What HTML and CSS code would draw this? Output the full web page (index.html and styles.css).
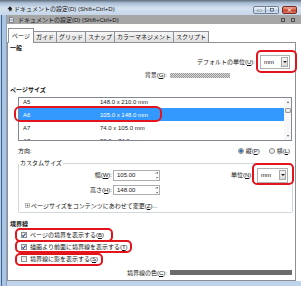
FILE: index.html
```html
<!DOCTYPE html>
<html>
<head>
<meta charset="utf-8">
<title>ドキュメントの設定</title>
<link rel="stylesheet" href="styles.css">
</head>
<body>
<div class="win">
  <div class="titlebar">
    <svg class="appicon" viewBox="0 0 6 6"><path d="M3 0.3 L5.7 3.2 L4.4 3.2 L4.4 5.6 L3.6 4.4 L2.6 5.6 L2 3.2 L0.3 3.2 Z" fill="#1c1c1c"/></svg>
    <span class="ttl">ドキュメントの設定(D) (Shift+Ctrl+D)</span>
    <div class="wbtns">
      <span class="wb min"><svg viewBox="0 0 13 8"><rect x="4" y="4" width="5" height="1.5" fill="#fff" stroke="#3b4a5e" stroke-width="0.5"/></svg></span>
      <span class="wb max"><svg viewBox="0 0 13 8"><rect x="4.5" y="2" width="4" height="3.5" fill="none" stroke="#3b4a5e" stroke-width="0.9"/></svg></span>
      <span class="wb close"><svg viewBox="0 0 15 8"><path d="M5.5 2 L9.5 6 M9.5 2 L5.5 6" stroke="#fff" stroke-width="1.3"/></svg></span>
    </div>
  </div>
  <div class="frame">
    <div class="dlg">
      <div class="dockbar">
        <svg class="docicon" viewBox="0 0 5 6"><path d="M0.5 0.5 H3.2 L4.5 1.8 V5.5 H0.5 Z" fill="#f4f4f4" stroke="#505050" stroke-width="0.6"/><path d="M1.3 2.5 H3.7 M1.3 3.7 H3.7" stroke="#4a79b8" stroke-width="0.6"/></svg>
        <span class="ttl">ドキュメントの設定(D) (Shift+Ctrl+D)</span>
        <span class="dockbtns"><i></i><i></i></span>
      </div>
      <div class="tabs">
        <span class="tab on">ページ</span>
        <span class="tab">ガイド</span>
        <span class="tab">グリッド</span>
        <span class="tab">スナップ</span>
        <span class="tab">カラーマネジメント</span>
        <span class="tab">スクリプト</span>
      </div>
      <div class="panel">
        <div class="h h1">一般</div>
        <div class="r-unit">
          <span>デフォルトの単位(<u>U</u>):</span>
          <span class="combo">mm<b></b></span>
        </div>
        <div class="r-bg">
          <span class="lbl">背景(<u>G</u>):</span>
          <span class="checker"></span>
        </div>

        <div class="h h2">ページサイズ</div>
        <div class="list">
          <div class="rows">
            <div class="item"><span class="nm">A5</span><span>148.0 x 210.0 mm</span></div>
            <div class="item sel"><span class="nm">A6</span><span>105.0 x 148.0 mm</span></div>
            <div class="item"><span class="nm">A7</span><span>74.0 x 105.0 mm</span></div>
            <div class="item"><span class="nm">A8</span><span>52.0 x 74.0 mm</span></div>
          </div>
          <div class="sb">
            <i class="up"></i>
            <i class="thumb"></i>
            <i class="dn"></i>
          </div>
        </div>

        <div class="r-ori">
          <span>方向:</span>
          <span class="radios">
            <i class="radio on"></i><span>縦(<u>P</u>)</span>
            <i class="radio"></i><span>横(<u>L</u>)</span>
          </span>
        </div>

        <fieldset class="grp">
          <legend>カスタムサイズ</legend>
          <div class="r-w">
            <span class="wl">幅(<u>W</u>):</span>
            <span class="entry">105.00<i class="spin"></i></span>
            <span class="unit">
              <span>単位(<u>N</u>):</span>
              <span class="combo c2">mm<b></b></span>
            </span>
          </div>
          <div class="r-h">
            <span class="wl">高さ(<u>H</u>):</span>
            <span class="entry">148.00<i class="spin"></i></span>
          </div>
          <div class="exp">
            <svg viewBox="0 0 5 5"><rect x="0.5" y="0.5" width="4" height="4" fill="#fff" stroke="#8f8f8f" stroke-width="0.6"/><path d="M1.5 2.5 H3.5 M2.5 1.5 V3.5" stroke="#333" stroke-width="0.6"/></svg>
            <span>ページサイズをコンテンツにあわせて変更(<u>Z</u>)...</span>
          </div>
        </fieldset>

        <div class="h h3">境界線</div>
        <div class="cb"><i class="box on"></i><span>ページの境界を表示する(<u>B</u>)</span></div>
        <div class="cb"><i class="box on"></i><span>描画より前面に境界線を表示する(<u>T</u>)</span></div>
        <div class="cb"><i class="box"></i><span>境界線に影を表示する(<u>S</u>)</span></div>
        <div class="r-col">
          <span class="lbl">境界線の色(<u>C</u>):</span>
          <span class="colbar"></span>
        </div>
      </div>
    </div>
  </div>

  <div class="mk m1"></div>
  <div class="mk m2"></div>
  <div class="mk m3"></div>
  <div class="mk m4"></div>
  <div class="mk m5"></div>
  <div class="mk m6"></div>
</div>
</body>
</html>
```
FILE: styles.css
```css
*{
	margin: 0;
	padding: 0;
	box-sizing: border-box;
}
body{
	font: 6px/1 "Liberation Sans", "Noto Sans CJK JP", sans-serif;
	color: #111;
	background: #fff;
}
i{
	display: block;
	font-style: normal;
}
.win{
	position: relative;
	width: 301px;
	height: 286px;
	display: flex;
	flex-direction: column;
	background: #bfd4eb;
	overflow: hidden;
}

/* window title */
.titlebar{
	height: 15px;
	flex: none;
	display: flex;
	align-items: center;
	padding: 2px 4px 0 7px;
	background: linear-gradient(#5d6c7c 0, #a9bcd2 3px, #d4e1ef 8px, #c6d7ea 15px);
}
.appicon{
	width: 6px;
	height: 6px;
	margin-right: 1px;
}
.ttl{
	flex: 1;
	white-space: nowrap;
}
.wbtns{
	align-self: flex-end;
	display: flex;
	margin-bottom: 1px;
}
.wb{
	height: 8px;
	border: 1px solid #6d7f97;
	background: linear-gradient(#f0f5fa, #cfdcea 50%, #b6cbe1 51%, #d6e3f0);
}
.wb svg{
	display: block;
	width: 100%;
	height: 100%;
}
.min{
	width: 13px;
	border-radius: 2px 0 0 2px;
}
.max{
	width: 13px;
	border-left: none;
	border-radius: 0 2px 2px 0;
	margin-right: 3px;
}
.close{
	width: 15px;
	border-color: #7a2a20;
	border-radius: 2px;
	background: linear-gradient(#eba58f, #d35a44 50%, #c03c27 51%, #db7a63);
}

/* frame + dialog */
.frame{
	flex: 1;
	display: flex;
	padding: 0 0 5px 7px;
	background: linear-gradient(to right, #b8cde5 0 1px, #3c6392 1px 2px, #aac5e3 2px 6px, #8ea4bc 6px 7px, transparent 7px);
}
.dlg{
	flex: 1;
	min-width: 0;
	display: flex;
	flex-direction: column;
	background: #fff;
}
.dockbar{
	height: 9px;
	flex: none;
	display: flex;
	align-items: center;
	padding: 0 6px 0 2px;
	background: #a6a6a6;
}
.docicon{
	width: 5px;
	height: 6px;
	margin-right: 4px;
}
.dockbtns{
	display: flex;
	gap: 6px;
}
.dockbtns i{
	width: 4px;
	height: 4px;
	border: 1px solid #505050;
}
.tabs{
	height: 18px;
	flex: none;
	display: flex;
	align-items: flex-end;
	padding-left: 1px;
}
.tab{
	height: 11px;
	display: flex;
	align-items: center;
	padding: 0 2px;
	margin-left: -1px;
	border: 1px solid #8d9096;
	border-bottom: none;
	background: linear-gradient(#f5f5f5, #e0e0e0);
	white-space: nowrap;
}
.tab.on{
	height: 15px;
	margin: 0 0 -1px 0;
	padding: 0 3px 1px;
	background: #fff;
	position: relative;
	z-index: 1;
}
.panel{
	flex: 1;
	margin-right: 5px;
	border: 1px solid #8d9096;
	background: #fff;
	display: flex;
	flex-direction: column;
}

/* panel content */
.h{
	font-weight: bold;
	line-height: 9px;
	padding-left: 2px;
}
.h1{ margin-top: 1px; }
.h2{ margin-top: 7px; }
.h3{ margin-top: 7px; }
u{
	text-decoration: underline;
	text-underline-offset: 1px;
}
.r-unit{
	height: 14px;
	margin-top: 2px;
	padding-right: 5px;
	display: flex;
	justify-content: flex-end;
	align-items: center;
	gap: 5px;
}
.combo{
	width: 30px;
	height: 14px;
	border: 1px solid #b0b0b0;
	display: flex;
	align-items: center;
	justify-content: space-between;
	padding-left: 3px;
	background: #fff;
}
.combo b{
	width: 7px;
	height: 10px;
	margin-right: 1px;
	border: 1px solid #a9a9a9;
	background: linear-gradient(#f7f7f7, #dadada);
	position: relative;
}
.combo b:after{
	content: '';
	position: absolute;
	left: 1px;
	top: 3px;
	border: 2px solid transparent;
	border-top: 2px solid #222;
	border-bottom: none;
}
.c2{
	width: 31px;
	height: 15px;
}
.r-bg, .r-col{
	display: flex;
	align-items: center;
}
.r-bg{
	height: 8px;
	margin-top: 2px;
}
.r-col{
	height: 9px;
	margin-top: 3px;
}
.lbl{
	width: 159px;
	flex: none;
	text-align: right;
}
.checker{
	width: 60px;
	height: 5px;
	margin-left: 3px;
	background: repeating-conic-gradient(#9a9a9a 0 25%, #d6d6d6 0 50%) 0 0/2px 2px;
}
.colbar{
	width: 122px;
	height: 5px;
	margin-left: 3px;
	background: #6b6b6b;
}

.list{
	height: 44px;
	margin: 2px 3px 0 10px;
	border: 1px solid #828790;
	display: flex;
	overflow: hidden;
}
.rows{
	flex: 1;
	margin-top: -3px;
}
.item{
	height: 13px;
	display: flex;
	align-items: center;
	padding-left: 4px;
	color: #222;
}
.item .nm{
	width: 77px;
}
.item.sel{
	background: #3399ff;
	color: #fff;
}
.sb{
	width: 7px;
	flex: none;
	display: flex;
	flex-direction: column;
	align-items: center;
	padding: 3px 0;
	background: #f8f8f8;
}
.sb .up, .sb .dn{
	border: 2px solid transparent;
	border-left-width: 1.5px;
	border-right-width: 1.5px;
}
.sb .up{
	border-top: none;
	border-bottom: 2px solid #555;
}
.sb .dn{
	margin-top: auto;
	border-bottom: none;
	border-top: 2px solid #555;
}
.sb .thumb{
	width: 6px;
	height: 5px;
	margin-top: 5px;
	border: 1px solid #9a9a9a;
	border-radius: 1px;
	background: linear-gradient(#fafafa, #dedede);
}

.r-ori{
	height: 9px;
	margin-top: 5px;
	padding: 0 5px 0 10px;
	display: flex;
	align-items: center;
}
.radios{
	margin-left: auto;
	display: flex;
	align-items: center;
}
.radio{
	width: 6px;
	height: 6px;
	border: 1px solid #8a8a8a;
	border-radius: 50%;
	background: #f2f2f2;
	margin-right: 2px;
}
.radio.on{
	background: radial-gradient(#2b6cb3 0 1.4px, #cfdcec 1.8px);
}
.radio + span{
	margin-right: 9px;
}
.radios span:last-child{
	margin-right: 0;
}

.grp{
	margin: 5px 2px 0 10px;
	border: 1px solid #d0d7dd;
	border-radius: 2px;
	padding: 0 0 2px;
	min-width: 0;
}
.grp legend{
	line-height: 7px;
	padding: 0 1px;
}
.r-w, .r-h{
	display: flex;
	align-items: center;
	padding-right: 4px;
}
.r-w{ height: 16px; }
.r-h{ height: 14px; }
.wl{
	width: 93px;
	flex: none;
	text-align: right;
	margin-right: 1px;
}
.entry{
	width: 47px;
	height: 11px;
	border: 1px solid #abadb3;
	display: flex;
	align-items: center;
	justify-content: space-between;
	padding: 0 1px 0 3px;
}
.r-h .entry{
	height: 10px;
}
.spin{
	width: 3px;
	height: 8px;
	background:
		linear-gradient(to bottom right, transparent 50%, #666 50%) 0 1px/1.5px 1.5px no-repeat,
		linear-gradient(to bottom left, transparent 50%, #666 50%) 1.5px 1px/1.5px 1.5px no-repeat,
		linear-gradient(to top right, transparent 50%, #666 50%) 0 5.5px/1.5px 1.5px no-repeat,
		linear-gradient(to top left, transparent 50%, #666 50%) 1.5px 5.5px/1.5px 1.5px no-repeat;
}
.unit{
	margin-left: auto;
	display: flex;
	align-items: center;
	gap: 4px;
}
.exp{
	height: 9px;
	margin-top: 4px;
	padding-left: 6px;
	display: flex;
	align-items: center;
	gap: 1px;
}
.exp svg{
	width: 5px;
	height: 5px;
}

.cb{
	height: 12px;
	padding-left: 13px;
	display: flex;
	align-items: center;
	gap: 3px;
}
.box{
	width: 6px;
	height: 6px;
	border: 1px solid #8e8f8f;
	background: linear-gradient(#e6e6e6, #fafafa);
	position: relative;
}
.box.on:after{
	content: '';
	position: absolute;
	left: 1.3px;
	top: 0;
	width: 1.3px;
	height: 2.6px;
	border: solid #2a4a80;
	border-width: 0 1px 1px 0;
	transform: rotate(40deg);
}

/* red annotation frames */
.mk{
	position: absolute;
	border: 2px solid #e4141c;
	border-radius: 5px;
}
.m1{ left: 256px; top: 50px; width: 41px; height: 23px; }
.m2{ left: 14px; top: 106px; width: 148px; height: 16px; border-radius: 6px; }
.m3{ left: 252px; top: 163px; width: 42px; height: 22px; }
.m4{ left: 15px; top: 228px; width: 98px; height: 14px; }
.m5{ left: 15px; top: 240px; width: 117px; height: 13px; }
.m6{ left: 15px; top: 253px; width: 88px; height: 13px; }
```
